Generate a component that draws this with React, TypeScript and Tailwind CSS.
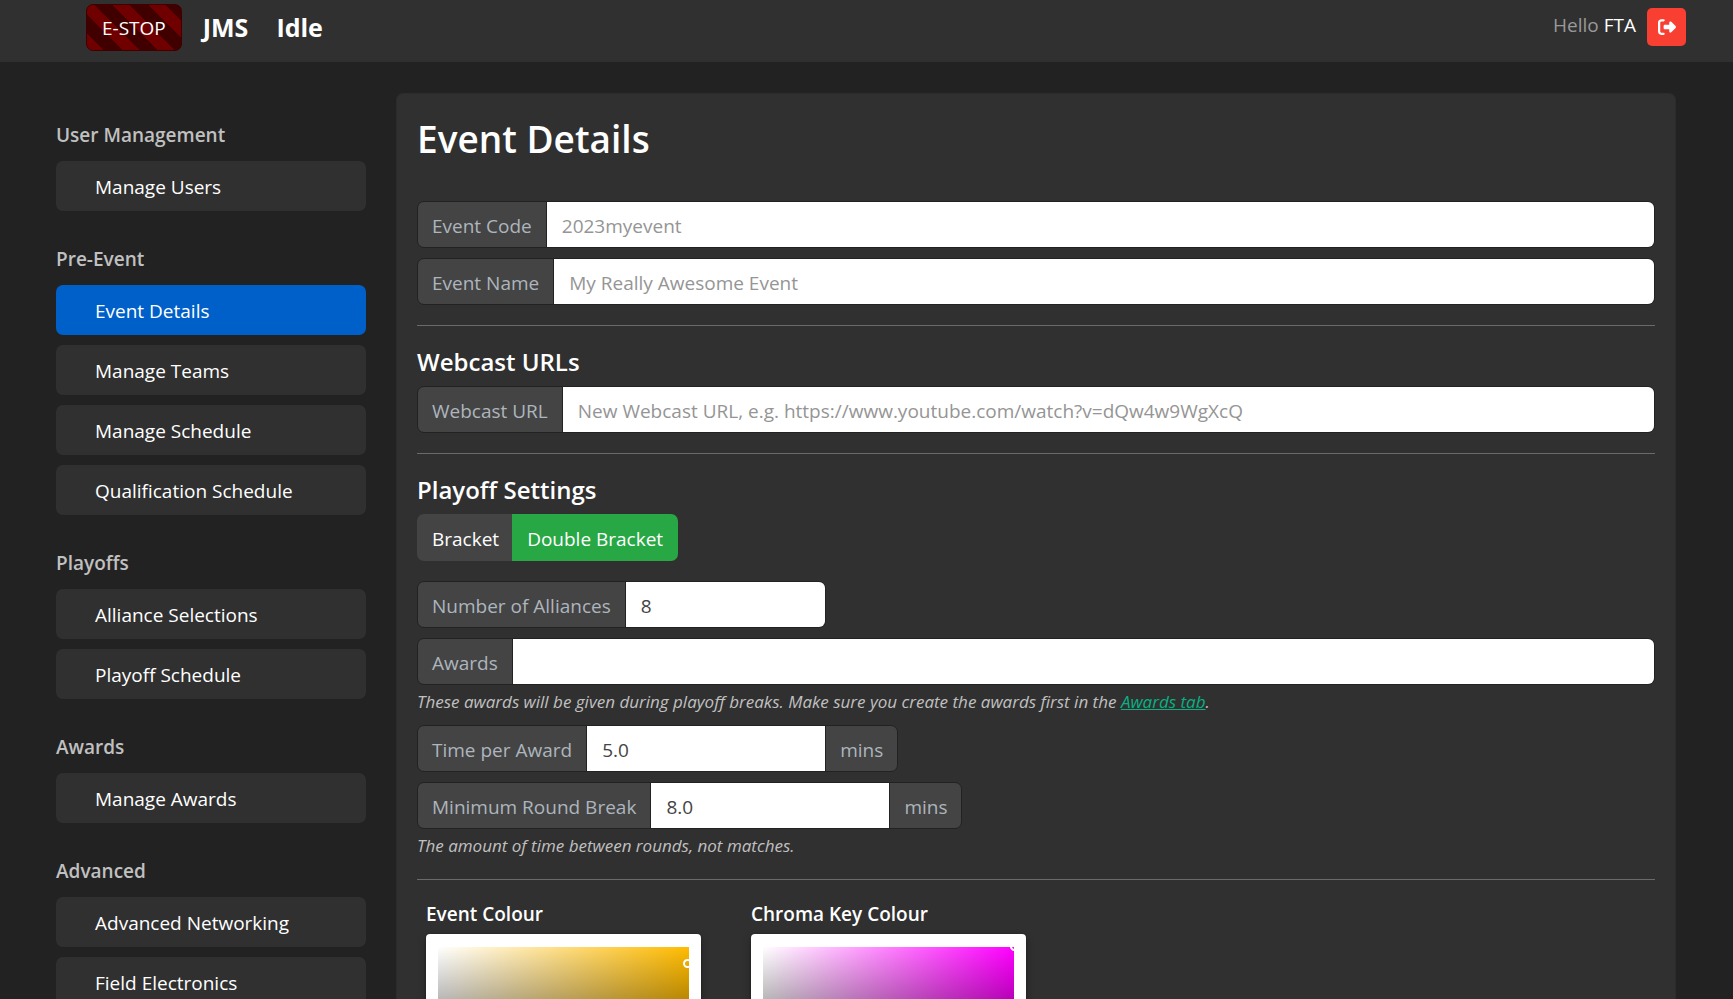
import { useState, type ReactNode } from 'react';
import { FaRightFromBracket } from 'react-icons/fa6';

const NAV = [
  { title: 'User Management', items: ['Manage Users'] },
  {
    title: 'Pre-Event',
    items: ['Event Details', 'Manage Teams', 'Manage Schedule', 'Qualification Schedule'],
  },
  { title: 'Playoffs', items: ['Alliance Selections', 'Playoff Schedule'] },
  { title: 'Awards', items: ['Manage Awards'] },
  { title: 'Advanced', items: ['Advanced Networking', 'Field Electronics'] },
];

function Header() {
  return (
    <header className="flex h-[62px] shrink-0 items-start bg-[#303030] pr-[47px] pl-[86px]">
      <button
        type="button"
        className="mt-1 h-[47px] rounded-[7px] border border-[#400000] bg-[repeating-linear-gradient(45deg,#700000_0,#700000_12px,#400000_12px,#400000_25px)] px-[15px] pt-[2px] text-[19px]"
      >
        E-STOP
      </button>
      <a href="#home" className="mt-[11px] ml-[21px] text-[25px] leading-8 font-bold">
        JMS
      </a>
      <span className="mt-[11px] ml-7 text-[25px] leading-8 font-bold">Idle</span>
      <p className="mt-[10px] ml-auto text-[19px] leading-[30px] text-[#999]">
        Hello <span className="text-white">FTA</span>
      </p>
      <button
        type="button"
        aria-label="Log out"
        className="mt-2 ml-[11px] flex h-[38px] w-[39px] items-center justify-center rounded-[5px] bg-[#f93e32]"
      >
        <FaRightFromBracket size={18} />
      </button>
    </header>
  );
}

function Sidebar() {
  return (
    <nav className="flex w-[310px] shrink-0 flex-col gap-[33px] pt-[58px]">
      {NAV.map((group) => (
        <section key={group.title}>
          <h2 className="mb-[11px] text-[19px] leading-[30px] font-semibold text-[#c0c0c0]">{group.title}</h2>
          <ul className="flex flex-col gap-[10px]">
            {group.items.map((item) => (
              <li key={item}>
                <a
                  href="#page"
                  className={`flex h-[50px] items-center rounded-[7px] px-[39px] pt-[2px] text-[19px] ${
                    item === 'Event Details' ? 'bg-[#0060c9]' : 'bg-[#303030]'
                  }`}
                >
                  {item}
                </a>
              </li>
            ))}
          </ul>
        </section>
      ))}
    </nav>
  );
}

type FieldProps = {
  id: string;
  label: string;
  className?: string;
  inputClassName?: string;
  placeholder?: string;
  value?: string;
  suffix?: string;
};

function Field({ id, label, className = '', inputClassName = 'flex-1', placeholder, value = '', suffix }: FieldProps) {
  const [text, setText] = useState(value);
  return (
    <div className={`flex h-[47px] overflow-hidden rounded-[7px] border border-[#222] bg-[#444] text-[19px] ${className}`}>
      <label
        htmlFor={id}
        className="flex items-center border-r border-[#222] px-[14px] pt-1 whitespace-nowrap text-[#adb5bd]"
      >
        {label}
      </label>
      <input
        id={id}
        value={text}
        placeholder={placeholder}
        onChange={(e) => setText(e.target.value)}
        className={`min-w-0 bg-white px-[15px] pt-1 text-[#444] outline-none placeholder:text-[#959595] ${inputClassName}`}
      />
      {suffix && (
        <span className="flex items-center border-l border-[#222] px-[14px] pt-1 text-[#adb5bd]">{suffix}</span>
      )}
    </div>
  );
}

function Help({ children }: { children: ReactNode }) {
  return <p className="mt-1 mb-[10px] text-[17px] leading-[26px] text-[#c0c0c0] italic">{children}</p>;
}

function Rule() {
  return <hr className="my-5 h-px border-0 bg-[#6a6a6a]" />;
}

function ColourPicker({ label, area, knob }: { label: string; area: string; knob: string }) {
  return (
    <section className="w-[275px]">
      <h3 className="mb-[6px] text-[19px] leading-7 font-semibold">{label}</h3>
      <div className="rounded-[4px] bg-white px-3 pt-[13px] pb-5 shadow-[0_0_2px_rgba(0,0,0,0.3),0_4px_8px_rgba(0,0,0,0.3)]">
        <div className={`relative h-[188px] overflow-hidden ${area}`}>
          <span className={`absolute size-[9px] rounded-full border-2 border-white ${knob}`} />
        </div>
      </div>
    </section>
  );
}

function EventDetails() {
  return (
    <main className="min-w-0 flex-1 self-start rounded-[7px] border border-[#2c2c2c] bg-[#303030] px-5 pt-5 pb-10">
      <h1 className="mb-[37px] text-[37px] leading-[50px] font-semibold">Event Details</h1>
      <div className="flex flex-col gap-[10px]">
        <Field id="code" label="Event Code" placeholder="2023myevent" />
        <Field id="name" label="Event Name" placeholder="My Really Awesome Event" />
      </div>
      <Rule />
      <h2 className="mb-[9px] pt-px text-[24px] leading-[30px] font-semibold">Webcast URLs</h2>
      <Field
        id="webcast"
        label="Webcast URL"
        placeholder="New Webcast URL, e.g. https://www.youtube.com/watch?v=dQw4w9WgXcQ"
      />
      <Rule />
      <h2 className="mb-[9px] pt-px text-[24px] leading-[30px] font-semibold">Playoff Settings</h2>
      <div className="mb-5 flex h-[47px] text-[19px]">
        <button type="button" className="rounded-l-[7px] bg-[#444] pt-[3px] pr-[13px] pl-[15px]">
          Bracket
        </button>
        <button type="button" className="rounded-r-[7px] bg-[#28a745] px-[15px] pt-[3px]">
          Double Bracket
        </button>
      </div>
      <div className="flex flex-col gap-[10px]">
        <Field id="alliances" label="Number of Alliances" value="8" className="w-[409px]" />
        <Field id="awards" label="Awards" />
      </div>
      <Help>
        These awards will be given during playoff breaks. Make sure you create the awards first in the{' '}
        <a href="#awards" className="text-[#0ab083] underline">
          Awards tab
        </a>
        .
      </Help>
      <div className="flex flex-col items-start gap-[10px]">
        <Field id="award-time" label="Time per Award" value="5.0" suffix="mins" inputClassName="w-[238px]" />
        <Field id="round-break" label="Minimum Round Break" value="8.0" suffix="mins" inputClassName="w-[238px]" />
      </div>
      <Help>The amount of time between rounds, not matches.</Help>
      <Rule />
      <div className="flex gap-[50px] px-[9px]">
        <ColourPicker
          label="Event Colour"
          area="bg-[linear-gradient(to_top,#000,transparent),linear-gradient(to_right,#fff,#ffbb00)]"
          knob="top-3 -right-[3px]"
        />
        <ColourPicker
          label="Chroma Key Colour"
          area="bg-[linear-gradient(to_top,#000,transparent),linear-gradient(to_right,#fff,#ff00ff)]"
          knob="-top-[5px] -right-[5px]"
        />
      </div>
    </main>
  );
}

export default function App() {
  return (
    <div className="flex h-screen flex-col bg-[#222] font-['Open_Sans','Noto_Sans',sans-serif] text-white">
      <Header />
      <div className="flex min-h-0 flex-1 items-start gap-[30px] overflow-y-auto pr-[57px] pl-14 [scrollbar-width:none]">
        <Sidebar />
        <div className="flex min-w-0 flex-1 pt-[31px]">
          <EventDetails />
        </div>
      </div>
    </div>
  );
}
